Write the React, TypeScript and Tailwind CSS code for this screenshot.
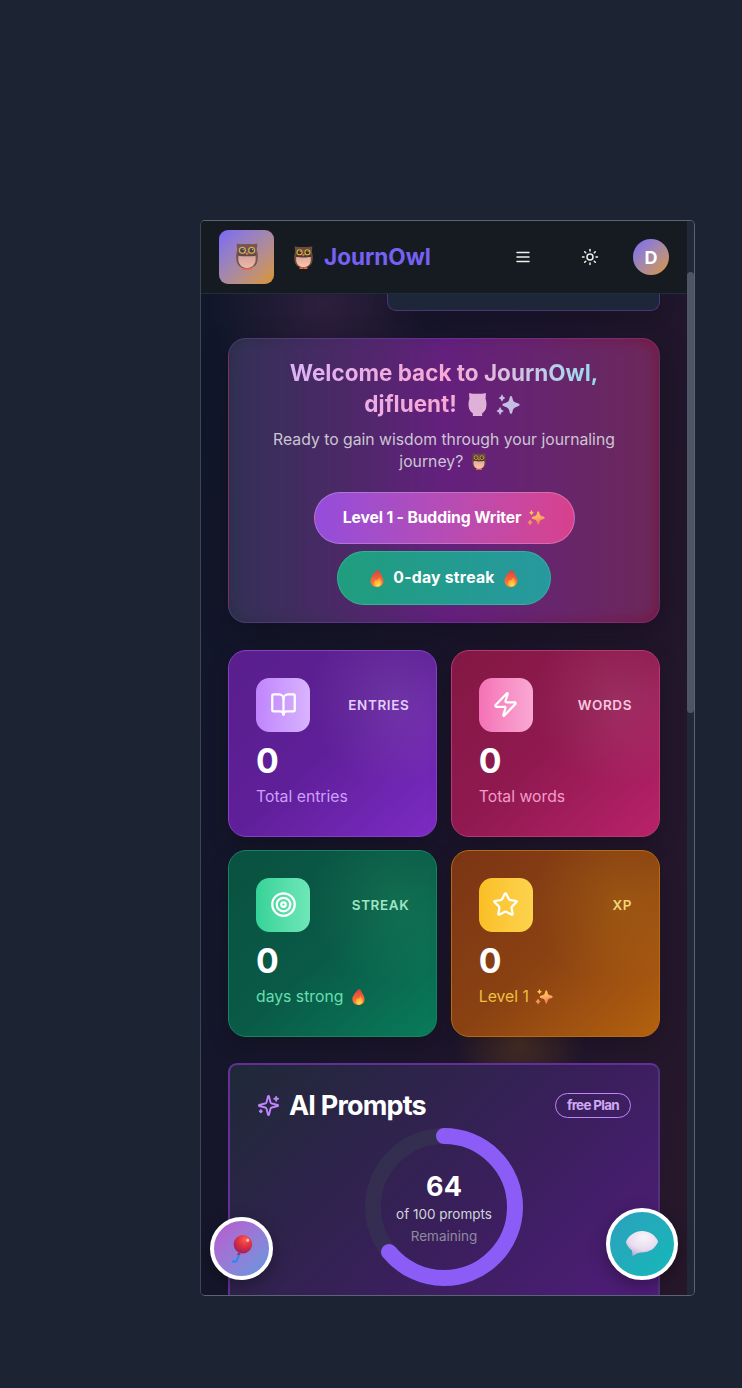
import React from "react";
import { BookOpen, Star, Sun, Target, Zap } from "lucide-react";

type IconProps = { className?: string };

function Owl({ className = "" }: IconProps) {
  return (
    <svg viewBox="0 0 26 32" className={className}>
      <defs>
        <linearGradient id="belly" x1="0" y1="0" x2="0" y2="1">
          <stop offset="0" stopColor="#dcaa9e" />
          <stop offset="1" stopColor="#ffc4ab" />
        </linearGradient>
      </defs>
      <path d="M7.500 28h5.300v4H7.500zM13.300 28h5.200v4h-5.200z" fill="#f4623e" />
      <path d="M1 .5c2.500.8 5 1 7 .8h10c2 .2 4.500 0 7-.8.6 3-.6 5-.3 8.500 1.600 4 1.600 8 .6 12.500-1 5-4.300 8.500-12.300 8.500S1.700 26.500.7 21.500C-.3 17-.3 13 1.300 9 1.600 5.500.4 3.500 1 .5Z" fill="#70493a" />
      <path d="M3.200 14.500h19.600c.9 4 .6 7.500-1.300 10.700-1.700 3-4.800 4.300-8.500 4.300s-6.800-1.300-8.500-4.300C2.600 22 2.300 18.500 3.200 14.500Z" fill="url(#belly)" />
      <path d="M2.500 11.500c4 2.500 17 2.500 21 0v3.300c-5 1.400-16 1.400-21 0z" fill="#533630" />
      <circle cx="7.500" cy="8.700" r="3.500" fill="#352c34" stroke="#d2bd36" strokeWidth="1.500" />
      <circle cx="18.500" cy="8.700" r="3.500" fill="#352c34" stroke="#d2bd36" strokeWidth="1.500" />
      <circle cx="8.400" cy="7.800" r=".7" fill="#ddd" />
      <circle cx="19.400" cy="7.800" r=".7" fill="#ddd" />
      <path d="M10.800 11.500h4.400L13 14.700z" fill="#f3693f" />
    </svg>
  );
}

function OwlShape({ className = "" }: IconProps) {
  return (
    <svg viewBox="0 0 26 32" className={className} fill="currentColor">
      <path d="M1.500 0c2.500 1 5 1.200 7 1h9c2 .2 4.500 0 7-1 .6 3-.4 5-.2 8.500 1.400 4 1.600 8 .6 12.500-.8 3.400-2.700 5.800-5.400 7v4h-13v-4c-2.700-1.200-4.600-3.600-5.400-7-1-4.500-.8-8.500.6-12.500C1.900 5 .9 3 1.500 0Z" />
    </svg>
  );
}

const sparkleStars =
  "M20 4c1.500 0 1.800 2.500 2.500 5s2 3.300 4.500 4c2.200.7 4.500 1.200 4.500 2.800s-2.300 2-4.500 2.700c-2.500.8-3.800 1.800-4.500 4.300s-1 5.200-2.500 5.200-1.800-2.700-2.500-5.200-2-3.500-4.500-4.300c-2.200-.7-4.500-1.200-4.500-2.700s2.300-2.100 4.500-2.800c2.500-.7 3.800-1.500 4.500-4S18.500 4 20 4ZM8 2c.8 0 .9 2 1.500 2.800S12 5.800 12 6.800 10.100 7.700 9.500 8.500 8.800 11 8 11s-.9-1.800-1.500-2.500S4 7.700 4 6.800s1.900-1.200 2.500-2S7.200 2 8 2ZM5.500 19c1 0 1 2.200 1.800 3s2.700 1 2.700 2-2 1.200-2.700 2-.8 3-1.800 3-1.100-2.200-1.800-3S1 25 1 24s2-1.200 2.700-2 .8-3 1.800-3Z";

function Sparkle({ className = "", flat = false }: IconProps & { flat?: boolean }) {
  return (
    <svg viewBox="0 0 32 32" className={className}>
      <defs>
        <linearGradient id="sparkle-fill" x1="0" y1="0" x2=".3" y2="1">
          <stop offset="0" stopColor="#ffd84a" />
          <stop offset=".6" stopColor="#ffae63" />
          <stop offset="1" stopColor="#ef765d" />
        </linearGradient>
      </defs>
      <path d={sparkleStars} fill={flat ? "currentColor" : "url(#sparkle-fill)"} />
    </svg>
  );
}

function Fire({ className = "" }: IconProps) {
  return (
    <svg viewBox="2 0 27 33" className={className}>
      <defs>
        <linearGradient id="flame" x1="0" y1="0" x2="0" y2="1">
          <stop offset="0" stopColor="#e33b3e" />
          <stop offset="1" stopColor="#ff8a32" />
        </linearGradient>
        <radialGradient id="flame-core" cx=".55" cy=".85" r=".7">
          <stop offset="0" stopColor="#ffe04a" />
          <stop offset="1" stopColor="#ff9a35" />
        </radialGradient>
      </defs>
      <path d="M18 0c-5 2-7 4-7.500 7L10 6c-3 3-4 5-4 8l-1-.5c-1.500 2-2 4-2 7.500 0 7 5 12 12.500 12S28 28 28 21c0-5-2-7-4-11-1.700-3-3-6-6-10Z" fill="url(#flame)" />
      <path d="M20 14c-.5 3-3.500 4-5 6.500L13 19c-2 2-3.500 4-3.500 7 0 4 3 6.500 7 6.500s8-2.500 8-8c0-4.500-3-6-4.500-10.500Z" fill="url(#flame-core)" />
    </svg>
  );
}

function Balloon({ className = "" }: IconProps) {
  return (
    <svg viewBox="0 0 32 32" className={className}>
      <defs>
        <radialGradient id="balloon-skin" cx=".62" cy=".25" r=".8">
          <stop offset="0" stopColor="#ff5a51" />
          <stop offset=".5" stopColor="#dc3040" />
          <stop offset="1" stopColor="#9b1f5c" />
        </radialGradient>
      </defs>
      <path d="M12 22c.8 4-1.500 3.500-1.500 6 0 2.500-2.500 2.700-6 2.200" fill="none" stroke="#258cf2" strokeWidth="2.400" />
      <path d="m12.500 19.500-2.500 3 4.500.3z" fill="#b8204b" />
      <circle cx="17" cy="10.500" r="10.500" fill="url(#balloon-skin)" />
      <ellipse cx="22.500" cy="6" rx="1.600" ry="2" fill="#ffc0c0" />
    </svg>
  );
}

function Speech({ className = "" }: IconProps) {
  return (
    <svg viewBox="0 0 36 32" className={className}>
      <defs>
        <radialGradient id="bubble" cx=".55" cy=".25" r=".8">
          <stop offset="0" stopColor="#f8f5fa" />
          <stop offset=".6" stopColor="#e7dcef" />
          <stop offset="1" stopColor="#b9a0d0" />
        </radialGradient>
      </defs>
      <path d="M18 3c7 0 13 3.500 16.200 10.500-3 7.500-9 10.500-16.200 11-3 .2-5.500.7-9.500 3.800L8 22.500C5 20.500 3 17.500 1.800 14 5 7 11 3 18 3Z" fill="url(#bubble)" />
    </svg>
  );
}

type Stat = {
  title: string;
  label: string;
  icon: React.ReactNode;
  emoji?: React.ReactNode;
  card: string;
  glow: string;
  tile: string;
  titleColor: string;
  labelColor: string;
};

const iconClass = "mb-[2px] h-[27px] w-[27px] text-white";

const stats: Stat[] = [
  {
    title: "ENTRIES",
    label: "Total entries",
    icon: <BookOpen className={iconClass} />,
    card: "border-[#8640c8] from-[#591f8b] via-[#5f1f99] to-[#7d2bc5]",
    glow: "bg-[radial-gradient(circle_at_80%_26%,#ffffff16,transparent_40%)]",
    tile: "from-[#c084fc] to-[#d8b4fe]",
    titleColor: "text-[#e3cdf9]",
    labelColor: "text-[#ce9ffa]",
  },
  {
    title: "WORDS",
    label: "Total words",
    icon: <Zap className={iconClass} />,
    card: "border-[#b83873] from-[#831843] via-[#901950] to-[#b9226a]",
    glow: "bg-[radial-gradient(circle_at_80%_26%,#ffffff16,transparent_40%)]",
    tile: "from-[#f472b6] to-[#f9a8d4]",
    titleColor: "text-[#f5c6de]",
    labelColor: "text-[#f49bca]",
  },
  {
    title: "STREAK",
    label: "days strong",
    icon: <Target className={iconClass} />,
    emoji: <Fire className="ml-[9px] h-[16px] w-[13px]" />,
    card: "border-[#168562] from-[#0a5140] via-[#095a47] to-[#097c5a]",
    glow: "bg-[radial-gradient(circle_at_80%_26%,#4ade8020,transparent_40%)]",
    tile: "from-[#34d399] to-[#6ee7b7]",
    titleColor: "text-[#9ee5c5]",
    labelColor: "text-[#67dfae]",
  },
  {
    title: "XP",
    label: "Level 1",
    icon: <Star className={iconClass} />,
    emoji: <Sparkle className="ml-[6px] h-[18px] w-[18px]" />,
    card: "border-[#b76a16] from-[#7b3514] via-[#8a4112] to-[#b3620d]",
    glow: "bg-[radial-gradient(circle_at_80%_26%,#facc1520,transparent_40%)]",
    tile: "from-[#fbbf24] to-[#fcd34d]",
    titleColor: "text-[#f2d675]",
    labelColor: "text-[#efc041]",
  },
];

function StatCard({ stat }: { stat: Stat }) {
  return (
    <div className={`relative h-[186.500px] overflow-hidden rounded-[18px] border bg-linear-to-br shadow-[0_8px_22px_#00000030] ${stat.card}`}>
      <div className={`h-full px-[27px] pt-[27px] ${stat.glow}`}>
        <div className="flex items-center justify-between">
          <div className={`flex h-[54px] w-[54px] items-center justify-center rounded-[13.500px] bg-linear-to-r ${stat.tile}`}>
            {stat.icon}
          </div>
          <span className={`text-[13.500px] font-semibold tracking-[0.043em] ${stat.titleColor}`}>{stat.title}</span>
        </div>
        <div className="mt-[9px] text-[33.750px] leading-[40.500px] font-bold text-white">0</div>
        <div className={`mt-[4px] flex items-center text-[15.750px] leading-[22.500px] ${stat.labelColor}`}>
          {stat.label}
          {stat.emoji}
        </div>
      </div>
    </div>
  );
}

function Header() {
  return (
    <header className="flex h-[73px] shrink-0 items-center border-b border-[#1e2f3b] bg-[#161b22] px-[18px]">
      <div className="flex h-[54px] w-[55px] items-center justify-center rounded-[9px] bg-linear-to-br from-[#7c66f8] to-[#dc9512]">
        <Owl className="mb-[2px] h-[27px] w-[22px] opacity-80" />
      </div>
      <Owl className="ml-[20px] h-[23px] w-[19px]" />
      <span className="ml-[11px] text-[22.500px] font-bold text-[#7661f5]">JournOwl</span>
      <div className="ml-auto flex items-center">
        <svg viewBox="0 0 24 24" className="h-[18px] w-[18px] text-[#eef2ee]" fill="none" stroke="currentColor" strokeWidth="2" strokeLinecap="round">
          <path d="M4 6h16M4 12h16M4 18h16" />
        </svg>
        <Sun className="ml-[49px] h-[18px] w-[18px] text-[#eef2ee]" />
        <div className="ml-[34px] flex h-[36px] w-[36px] items-center justify-center rounded-full bg-linear-to-br from-[#7c66f8] to-[#dc9512] text-[18px] font-bold text-white">
          D
        </div>
      </div>
    </header>
  );
}

function Welcome() {
  return (
    <section className="relative mt-[27px] h-[285px] shrink-0 overflow-hidden rounded-[18px] border border-[#a855f740] bg-linear-to-r from-[#2a3048] via-[#5c1e7a] to-[#741b44] text-center shadow-[0_10px_30px_#00000040]">
      <div className="absolute inset-[4px] rounded-[16px] bg-[linear-gradient(90deg,#343057,#4a2966_25%,#64207d_50%,#67256d_75%,#6b285a)] blur-[5px]" />
      <div className="relative flex flex-col items-center pt-[18px]">
        <h1 className="w-[376px] bg-linear-to-r from-[#d8b4fe] via-[#f9a8d4] to-[#67e8f9] bg-clip-text text-[22.500px] leading-[31px] font-bold text-transparent">
          Welcome back to JournOwl,
          <br />
          djfluent! <OwlShape className="ml-[6px] inline h-[23px] w-[19px] align-[-4px] text-[#dfb1d8]" />{" "}
          <Sparkle flat className="mr-[4px] ml-[3px] inline h-[24px] w-[24px] align-[-5px] text-[#c5bde2]" />
        </h1>
        <p className="mt-[10px] text-[15.750px] leading-[22px] text-[#ccc6d3]">
          Ready to gain wisdom through your journaling
          <br />
          journey? <Owl className="mr-[3px] ml-[4px] inline h-[17px] w-[14px] align-[-3px]" />
        </p>
        <div className="mt-[19px] flex h-[52px] w-[261px] items-center justify-center rounded-full border border-[#ffffff38] bg-linear-to-r from-[#944cdb] to-[#d8408d] text-[15.750px] font-bold tracking-[-0.009em] text-white">
          Level 1 - Budding Writer
          <Sparkle className="ml-[6px] h-[18px] w-[18px]" />
        </div>
        <div className="mt-[7px] flex h-[54px] w-[214px] items-center justify-center rounded-full border border-[#34d39980] bg-linear-to-r from-[#209d7d] to-[#27999f] text-[15.750px] font-bold tracking-[0.016em] text-white">
          <Fire className="mr-[9px] h-[17px] w-[14px]" />
          0-day streak
          <Fire className="ml-[9px] h-[17px] w-[14px]" />
        </div>
      </div>
    </section>
  );
}

function Prompts() {
  const used = 0.64;
  const length = 2 * Math.PI * 71;
  return (
    <section className="mt-[26.500px] h-[340px] shrink-0 rounded-[9px] border-2 border-[#65309a] border-r-[#50347a] bg-[linear-gradient(135deg,#1f2937,#3a1f5c_50%,#581c87)] px-[27px] pt-[22px]">
      <div className="flex items-center justify-between">
        <div className="flex items-center">
          <svg viewBox="0 0 24 24" className="h-[23px] w-[23px] text-[#c084fc]" fill="none" stroke="currentColor" strokeWidth="2" strokeLinecap="round" strokeLinejoin="round">
            <path d="M9.937 15.500A2 2 0 0 0 8.500 14.063l-6.135-1.582a.5.5 0 0 1 0-.962L8.500 9.936A2 2 0 0 0 9.937 8.500l1.582-6.135a.5.5 0 0 1 .963 0L14.063 8.500A2 2 0 0 0 15.500 9.937l6.135 1.581a.5.5 0 0 1 0 .964L15.500 14.063a2 2 0 0 0-1.437 1.437l-1.582 6.135a.5.5 0 0 1-.963 0zM20 3v4M22 5h-4M4 17v2M5 18H3" />
          </svg>
          <h2 className="ml-[9px] pt-[2px] text-[27px] leading-[34px] font-bold tracking-[-0.030em] text-white">AI Prompts</h2>
        </div>
        <span className="flex h-[25px] w-[76px] items-center justify-center rounded-full border border-[#c084fc] pt-[1px] text-[13.500px] font-bold tracking-[-0.053em] text-[#d0a8f4]">
          free Plan
        </span>
      </div>
      <div className="mt-[5px] flex justify-center">
        <div className="grid h-[158px] w-[158px] place-items-center">
          <svg viewBox="0 0 158 158" className="col-start-1 row-start-1 h-[158px] w-[158px] -rotate-90" fill="none" strokeWidth="16">
            <circle cx="79" cy="79" r="71" stroke="#37415166" />
            <circle cx="79" cy="79" r="71" stroke="#8b5cf6" strokeLinecap="round" strokeDasharray={`${length * used} ${length}`} />
          </svg>
          <div className="col-start-1 row-start-1 flex flex-col items-center">
            <span className="pt-[1px] text-[27px] leading-[35px] font-bold text-white">64</span>
            <span className="text-[13.500px] leading-[20px] text-[#d1d5db]">of 100 prompts</span>
            <span className="mt-[2px] text-[13.500px] leading-[20px] text-[#8f8a9f]">Remaining</span>
          </div>
        </div>
      </div>
    </section>
  );
}

export default function App() {
  return (
    <div className="h-[1388px] w-[742px] bg-[#1c2332] pt-[220px] pl-[200px] font-['Inter',sans-serif]">
      <div className="relative flex h-[1076px] w-[495px] overflow-hidden rounded-[5px] border border-[#5b6472] border-l-[#3e4655]">
        <div className="flex w-[486px] shrink-0 flex-col">
          <Header />
          <main className="flex min-h-0 flex-1 flex-col overflow-hidden bg-[radial-gradient(ellipse_110px_110px_at_120px_10px,#4c285570,transparent),radial-gradient(ellipse_65px_55px_at_318px_750px,#6e451f80,transparent),linear-gradient(100deg,#10172a,#1b152b_50%,#27172b)] px-[27px]">
            <div className="h-[17px] w-[273px] shrink-0 self-end rounded-b-[9px] border border-t-0 border-[#493678] bg-[#1e273a] shadow-[0_6px_16px_#00000030]" />
            <Welcome />
            <div className="mt-[27px] grid shrink-0 grid-cols-2 gap-[13.500px]">
              {stats.map((stat) => (
                <StatCard key={stat.title} stat={stat} />
              ))}
            </div>
            <Prompts />
          </main>
        </div>
        <div className="w-[7px] flex-1 bg-[#1f2937] pt-[51px]">
          <div className="h-[441px] rounded-[4px] bg-[#4b5563]" />
        </div>
        <div className="absolute bottom-[15px] left-[9px] flex h-[63px] w-[63px] items-center justify-center rounded-full border-4 border-white bg-linear-to-br from-[#b957ce] to-[#5c98df] shadow-[0_6px_18px_#00000050]">
          <Balloon className="h-[28px] w-[28px]" />
        </div>
        <div className="absolute right-[16px] bottom-[15px] flex h-[72px] w-[72px] items-center justify-center rounded-full border-4 border-white bg-linear-to-br from-[#2ba1bd] to-[#12b8b8] shadow-[0_6px_18px_#00000050]">
          <Speech className="h-[32px] w-[36px]" />
        </div>
      </div>
    </div>
  );
}
